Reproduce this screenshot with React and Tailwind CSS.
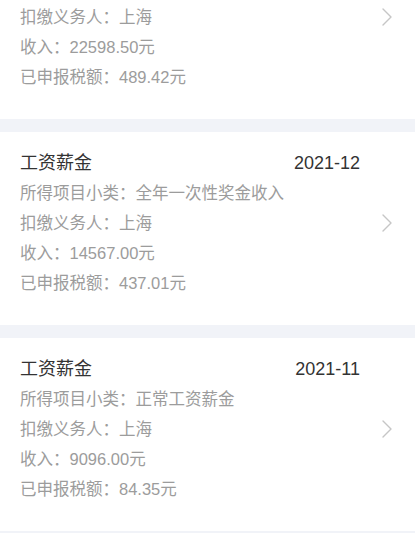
const cards = [
  {
    partial: true,
    payer: "上海",
    income: "22598.50元",
    tax: "489.42元",
  },
  {
    title: "工资薪金",
    date: "2021-12",
    sub: "全年一次性奖金收入",
    payer: "上海",
    income: "14567.00元",
    tax: "437.01元",
  },
  {
    title: "工资薪金",
    date: "2021-11",
    sub: "正常工资薪金",
    payer: "上海",
    income: "9096.00元",
    tax: "84.35元",
  },
];

function Chevron() {
  return (
    <svg width="10" height="18" viewBox="0 0 10 18" fill="none">
      <polyline points="1,1 9,9 1,17" stroke="#c6c6c6" strokeWidth="1.4" strokeLinecap="round" strokeLinejoin="round" />
    </svg>
  );
}

function Row({ children, right }) {
  return (
    <div className="h-[30px] flex items-center justify-between text-[16.5px] text-[#9c9c9c]">
      <span>{children}</span>
      {right}
    </div>
  );
}

function Card({ card }) {
  return (
    <div className={`bg-white pl-5 pr-[23px] pb-[27px] ${card.partial ? "pt-[2px]" : "pt-4"}`}>
      {!card.partial && (
        <>
          <div className="h-[30px] flex items-center justify-between mr-[32px] text-[18px] text-[#333333]">
            <span>{card.title}</span>
            <span>{card.date}</span>
          </div>
          <Row>所得项目小类：{card.sub}</Row>
        </>
      )}
      <Row right={<Chevron />}>扣缴义务人：{card.payer}</Row>
      <Row>收入：{card.income}</Row>
      <Row>已申报税额：{card.tax}</Row>
    </div>
  );
}

export default function App() {
  return (
    <div
      className="w-[415px] h-[533px] overflow-hidden bg-[#f1f3f8] flex flex-col gap-[13px]"
      style={{ fontFamily: '"Liberation Sans", "Noto Sans CJK SC", sans-serif' }}
    >
      {cards.map((c, i) => (
        <Card key={i} card={c} />
      ))}
    </div>
  );
}
